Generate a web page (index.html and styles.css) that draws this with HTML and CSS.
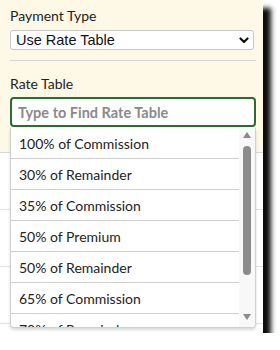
FILE: index.html
```html
<!DOCTYPE html>
<html lang="en">
<head>
    <meta charset="UTF-8">
    <meta name="viewport" content="width=device-width, initial-scale=1.0">
    <title>Rate Table</title>
    <link rel="stylesheet" href="styles.css">
</head>
<body>
    <div class="panel">
        <div class="form">
            <label class="field-label">Payment Type</label>
            <div class="select">
                <span>Use Rate Table</span>
                <svg class="chevron" width="10" height="7" viewBox="0 0 10 7">
                    <path d="M1.5 1.5 L5 5 L8.5 1.5" fill="none" stroke="#111" stroke-width="2.2" stroke-linecap="round" stroke-linejoin="round"/>
                </svg>
            </div>
            <hr class="divider">
            <label class="field-label">Rate Table</label>
            <div class="combo">
                <input type="text" class="combo-input" placeholder="Type to Find Rate Table">
                <!-- lista desplegable -->
                <div class="menu">
                    <ul class="options">
                        <li>100% of Commission</li>
                        <li>30% of Remainder</li>
                        <li>35% of Commission</li>
                        <li>50% of Premium</li>
                        <li>50% of Remainder</li>
                        <li>65% of Commission</li>
                        <li>70% of Remainder</li>
                    </ul>
                    <div class="scrollbar">
                        <span class="arrow up"></span>
                        <span class="thumb"></span>
                        <span class="arrow down"></span>
                    </div>
                </div>
            </div>
        </div>
        <div class="below">
            <div class="row"></div>
            <div class="row"></div>
            <div class="row"></div>
        </div>
    </div>
</body>
</html>
```

FILE: styles.css
```css
body {
    margin: 0;
    padding: 0;
    background-color: #fff;
    font-family: Lato, "Open Sans", sans-serif;
    color: #222;
}
.panel {
    width: 263px;
    height: 333px;
    background-color: #fff;
    box-shadow: 8px 8px 5px rgba(0, 0, 0, 0.95);
}
.form {
    background-color: #fdf9e6;
    padding: 6px 10px 0 10px;
    height: 146px;
    border-bottom: 1px solid #d6d6d6;
    width: 243px;
}
.field-label {
    display: block;
    font-size: 14px;
    line-height: 20px;
}
.select {
    margin-top: 4px;
    height: 18px;
    width: 237px;
    border: 1px solid #c8c8c8;
    border-radius: 3px;
    background-color: #fff;
    display: flex;
    align-items: center;
    justify-content: space-between;
    padding: 0 0 0 5px;
    font-family: "Liberation Sans", Arial, sans-serif;
    font-size: 14.5px;
    color: #111;
}
.chevron {
    margin-right: 4px;
}
.divider {
    border: none;
    border-top: 1px solid #d4d4d4;
    margin: 10px 0 13px 0;
    width: 246px;
}
.combo {
    position: relative;
    margin-top: 3px;
}
.combo-input {
    display: block;
    box-sizing: border-box;
    width: 246px;
    height: 30px;
    border: 2px solid #2e6b30;
    border-radius: 4px;
    padding: 0 6px;
    font-family: Lato, "Open Sans", sans-serif;
    font-size: 14.5px;
    background-color: #fff;
}
.combo-input::placeholder {
    color: #8a8a8a;
    font-weight: 700;
}
.menu {
    position: absolute;
    top: 31px;
    left: 0;
    width: 244px;
    height: 199px;
    background-color: #fff;
    border: 1px solid #d0d0d0;
    border-top: none;
    border-radius: 0 0 4px 4px;
    box-shadow: 0 2px 3px rgba(0, 0, 0, 0.15);
    display: flex;
    overflow: hidden;
}
.options {
    list-style: none;
    margin: 0;
    padding: 0;
    width: 228px;
}
.options li {
    height: 30px;
    line-height: 30px;
    padding-top: 1px;
    padding-left: 8px;
    border-bottom: 1px solid #cfcfcf;
    box-sizing: border-box;
    height: 31px;
    font-size: 14px;
    color: #222;
    white-space: nowrap;
}
.scrollbar {
    width: 16px;
    background-color: #f8f8f8;
    display: flex;
    flex-direction: column;
    align-items: center;
    padding-top: 4px;
}
.arrow {
    width: 0;
    height: 0;
    border-left: 4.5px solid transparent;
    border-right: 4.5px solid transparent;
}
.arrow.up {
    border-bottom: 6px solid #8a8a8a;
}
.arrow.down {
    border-top: 6px solid #8a8a8a;
    margin-top: 39px;
}
.thumb {
    margin-top: 8px;
    width: 8px;
    height: 129px;
    border-radius: 4px;
    background-color: #8c8c8c;
}
.row {
    height: 56px;
    border-bottom: 1px solid #e2e2e2;
}
```
